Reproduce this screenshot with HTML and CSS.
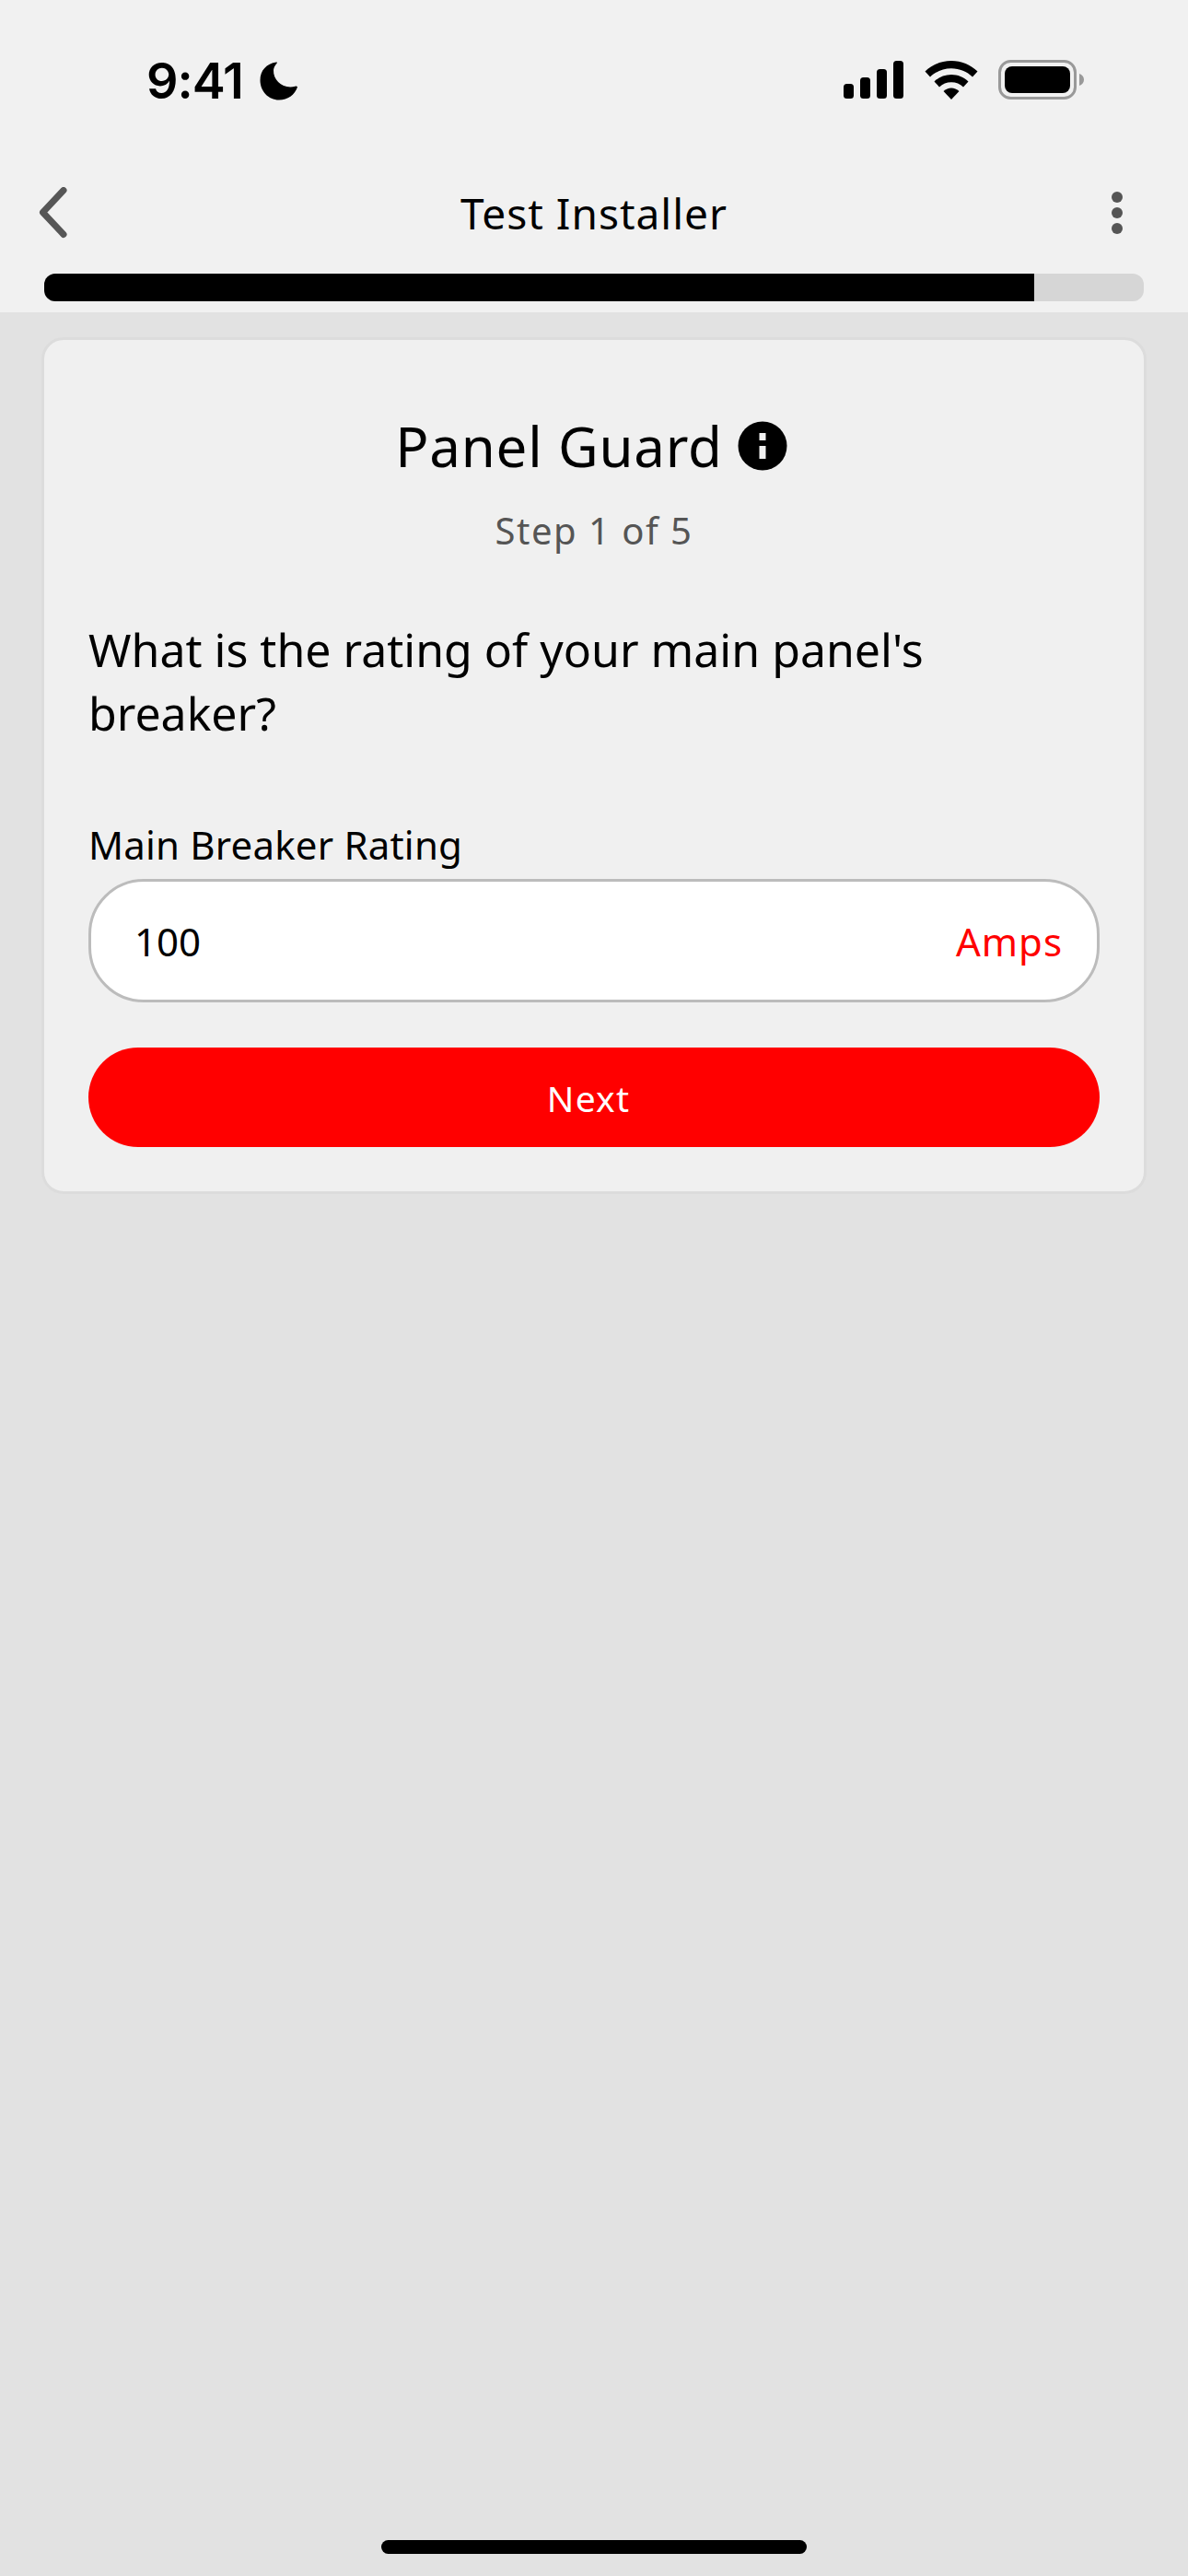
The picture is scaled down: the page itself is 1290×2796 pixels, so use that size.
FILE: index.html
```html
<!DOCTYPE html>
<html lang="en">
<head>
    <meta charset="UTF-8">
    <meta name="viewport" content="width=device-width, initial-scale=1.0">
    <title>Test Installer</title>
    <link rel="stylesheet" href="styles.css">
</head>
<body>

    <div class="top">
        <div class="status-bar">
            <div class="status-left">
                <span class="clock">9:41</span>
                <svg width="42" height="42" viewBox="0 0 42 42">
                    <path d="M18 0.500C7.500 2 0.500 9.500 0.500 20C0.500 32 9.500 41.500 21 41.500C30.500 41.500 38 36 41 27.500C40.500 26.500 39.500 26.500 38.500 26.700C26 30 14.500 21 15 9C15.200 6.500 16.500 4 18.700 1.500C19.200 0.800 18.800 0.400 18 0.500Z" fill="#000"/>
                </svg>
            </div>
            <div class="status-right">
                <svg width="66" height="41" viewBox="0 0 66 41">
                    <rect x="0" y="25" width="11" height="16" rx="3.500" fill="#000"/>
                    <rect x="18" y="18" width="11" height="23" rx="3.500" fill="#000"/>
                    <rect x="36" y="9" width="11" height="32" rx="3.500" fill="#000"/>
                    <rect x="54" y="0" width="11" height="41" rx="3.500" fill="#000"/>
                </svg>
                <svg width="58" height="42" viewBox="0 0 58 42">
                    <path d="M29 0C18 0 8 4.300 0.500 11.500L6 17.500C12 11.800 20 8.300 29 8.300C38 8.300 46 11.800 52 17.500L57.500 11.500C50 4.300 40 0 29 0Z" fill="#000"/>
                    <path d="M29 15C22 15 15.500 17.700 10.500 22.400L16 28.400C19.500 25 24 23.200 29 23.200C34 23.200 38.500 25 42 28.400L47.500 22.400C42.500 17.700 36 15 29 15Z" fill="#000"/>
                    <path d="M29 29.500C26 29.500 23 30.700 20.500 33L29 42L37.500 33C35 30.700 32 29.500 29 29.500Z" fill="#000"/>
                </svg>
                <svg width="94" height="43" viewBox="0 0 94 43">
                    <rect x="1.500" y="1.500" width="82" height="40" rx="12" fill="none" stroke="#999" stroke-width="3"/>
                    <rect x="7" y="7" width="71" height="29" rx="8" fill="#000"/>
                    <path d="M88 15C91 16 93 18.500 93 21.500C93 24.500 91 27 88 28Z" fill="#999"/>
                </svg>
            </div>
        </div>

        <div class="nav-bar">
            <svg class="nav-back" width="32" height="56" viewBox="0 0 32 56">
                <path d="M27 3.500L4.500 27.500L27 51.500" fill="none" stroke="#565656" stroke-width="7" stroke-linecap="round" stroke-linejoin="round"/>
            </svg>
            <h1 class="nav-title">Test Installer</h1>
            <div class="more">
                <span class="dot"></span>
                <span class="dot"></span>
                <span class="dot"></span>
            </div>
        </div>

        <div class="progress">
            <div class="progress-fill"></div>
        </div>
    </div>

    <div class="card">
        <div class="card-head">
            <h2>Panel Guard</h2>
            <svg width="54" height="54" viewBox="0 0 54 54">
                <circle cx="27" cy="27" r="26.500" fill="#000"/>
                <rect x="23.500" y="13" width="7" height="8" fill="#f0f0f0"/>
                <rect x="23.500" y="27" width="7" height="14" fill="#f0f0f0"/>
            </svg>
        </div>
        <p class="step">Step 1 of 5</p>
        <p class="question">What is the rating of your main panel's breaker?</p>
        <label class="field-label">Main Breaker Rating</label>
        <div class="field">
            <span class="field-value">100</span>
            <span class="field-unit">Amps</span>
        </div>
        <div class="next-button">Next</div>
    </div>

    <div class="home-bar"></div>

</body>
</html>
```

FILE: styles.css
```css
* {
    box-sizing: border-box;
}
html, body {
    height: 100%;
}
body {
    margin: 0;
    background-color: #e2e2e2;
    color: #000;
    font-family: "Noto Sans", sans-serif;
    display: flex;
    flex-direction: column;
}
.top {
    height: 339px;
    background-color: #f1f1f1;
    padding: 0 48px;
}
.status-bar {
    height: 150px;
    display: flex;
    justify-content: space-between;
    align-items: flex-start;
    padding: 65px 64px 0 111px;
}
.status-left {
    display: flex;
    align-items: center;
    gap: 18px;
    margin-top: 2px;
}
.clock {
    font-family: Inter, sans-serif;
    font-weight: 600;
    font-size: 54px;
    line-height: 42px;
    letter-spacing: -1px;
}
.status-right {
    display: flex;
    align-items: center;
    gap: 22px;
}
.nav-bar {
    height: 147px;
    padding: 14px 23px 0;
    display: grid;
    grid-template-columns: 1fr auto 1fr;
    align-items: center;
}
.nav-back {
    margin-left: -29px;
}
.nav-title {
    margin: 0;
    font-size: 46px;
    font-weight: 400;
    letter-spacing: 1px;
}
.more {
    justify-self: end;
    display: flex;
    flex-direction: column;
    gap: 5px;
}
.dot {
    width: 12px;
    height: 12px;
    border-radius: 50%;
    background-color: #555;
}
.progress {
    height: 30px;
    background-color: #d6d6d6;
    border-radius: 12px;
    overflow: hidden;
}
.progress-fill {
    width: 1075px;
    height: 100%;
    background-color: #000;
}
.card {
    margin: 27px 45px 0;
    padding: 79px 48px 48px;
    background-color: #f0f0f0;
    border: 3px solid #dcdcdc;
    border-radius: 24px;
}
.card-head {
    display: flex;
    justify-content: center;
    align-items: center;
    gap: 16px;
    padding-right: 6px;
}
.card-head h2 {
    margin: 0;
    font-size: 60px;
    font-weight: 400;
    line-height: 72px;
    letter-spacing: 0.8px;
}
.step {
    margin: 30px 0 0;
    text-align: center;
    font-size: 40px;
    line-height: 52px;
    letter-spacing: 1.500px;
    color: #555;
}
.question {
    max-width: 1000px;
    margin: 69px 0 0;
    font-size: 50px;
    line-height: 69px;
}
.field-label {
    display: block;
    margin-top: 80px;
    font-size: 42px;
    line-height: 56px;
    letter-spacing: 0.2px;
}
.field {
    height: 134px;
    margin-top: 9px;
    padding: 0 37px 0 47px;
    display: flex;
    justify-content: space-between;
    align-items: center;
    background-color: #fff;
    border: 3px solid #bcbcbc;
    border-radius: 60px;
    font-size: 42px;
}
.field-unit {
    color: #f00;
    letter-spacing: 1px;
}
.next-button {
    height: 108px;
    margin-top: 49px;
    padding-right: 12px;
    display: flex;
    justify-content: center;
    align-items: center;
    background-color: #f00;
    color: #fff;
    border-radius: 54px;
    font-size: 39px;
    letter-spacing: 1.200px;
}
.home-bar {
    flex: none;
    width: 462px;
    height: 15px;
    margin: auto auto 24px;
    background-color: #000;
    border-radius: 8px;
}
```
